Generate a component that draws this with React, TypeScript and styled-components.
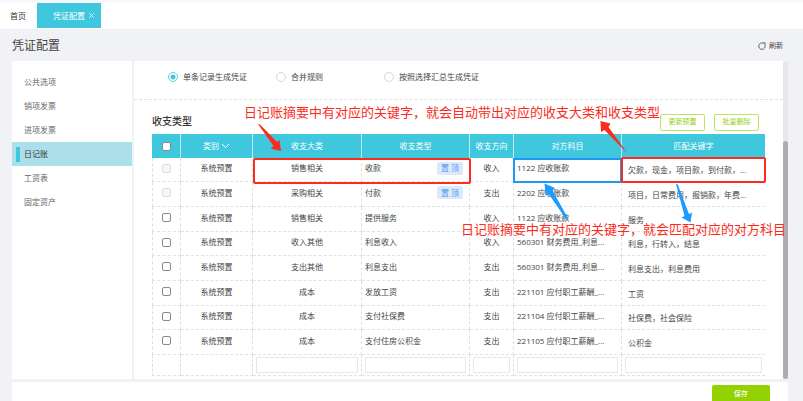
import React from 'react';
import styled, { createGlobalStyle } from 'styled-components';

const GlobalStyle = createGlobalStyle`
  * { box-sizing: border-box; }
  html, body { margin: 0; padding: 0; }
  body, button, input {
    font-family: "Open Sans", "Noto Sans CJK SC", sans-serif;
    font-size: 8px;
    line-height: 12px;
    color: #444;
  }
`;

const Page = styled.div`
  display: flex;
  flex-direction: column;
  height: 100vh;
  overflow: hidden;
  background: #f1f2f5;
`;

const TabBar = styled.nav`
  display: flex;
  flex: none;
  height: 29px;
  padding-bottom: 1px;
  border-top: 3px solid #f6f8fc;
  background: #fff;
`;

const Tab = styled.div<{ $active?: boolean }>`
  display: flex;
  align-items: center;
  gap: 4px;
  padding: ${p => (p.$active ? '0 7px 0 16px' : '0 11px 0 10px')};
  background: ${p => (p.$active ? '#3fc8dd' : '#fff')};
  a { color: ${p => (p.$active ? '#fff' : '#333')}; text-decoration: none; }
`;

const CloseButton = styled.button`
  display: flex;
  padding: 0;
  border: 0;
  background: none;
  color: #fff;
`;

const TitleBar = styled.header`
  display: flex;
  flex: none;
  align-items: center;
  justify-content: space-between;
  height: 32px;
  padding: 2px 20px 0 12px;
`;

const Title = styled.h1`
  margin: 0;
  font-size: 12px;
  line-height: 16px;
  font-weight: 400;
  color: #444;
`;

const RefreshButton = styled.button`
  display: flex;
  align-items: center;
  gap: 3px;
  padding: 0;
  border: 0;
  background: none;
  font-size: 7px;
`;

const Main = styled.div`
  display: flex;
  flex: 1;
  min-height: 0;
  gap: 2px;
  margin: 0 15px 3px 12px;
`;

const Sidebar = styled.nav`
  flex: none;
  width: 120px;
  padding-top: 9px;
  background: #fff;
`;

const SideLink = styled.a<{ $active?: boolean }>`
  display: flex;
  align-items: center;
  height: 24px;
  padding-left: 4px;
  gap: 4px;
  color: ${p => (p.$active ? '#333' : '#666')};
  background: ${p => (p.$active ? '#abe0ea' : 'transparent')};
  text-decoration: none;
  &::before {
    content: '';
    width: 4px;
    height: 15px;
    background: ${p => (p.$active ? '#3fc8dd' : 'transparent')};
  }
`;

const Content = styled.main`
  position: relative;
  flex: 1;
  min-width: 0;
  background: #fff;
`;

const Scrollbar = styled.div`
  flex: none;
  width: 5px;
  margin-left: -2px;
  padding-top: 80px;
  border-radius: 3px;
  background: #e8e8e8;
`;

const Thumb = styled.div`
  height: 100%;
  border-radius: 3px;
  background: #adadad;
`;

const RadioRow = styled.div`
  display: flex;
  height: 39px;
  padding: 0 34px 6px;
  border-bottom: 1px dashed #e2e2e2;
`;

const RadioLabel = styled.label`
  display: flex;
  align-items: center;
  gap: 5px;
  min-width: 108px;
  white-space: nowrap;
`;

const Radio = styled.input`
  appearance: none;
  width: 10px;
  height: 10px;
  margin: 0;
  border: 1px solid #d4d7da;
  border-radius: 50%;
  &:checked {
    border-color: #5fd0e2;
    background: radial-gradient(circle, #3fc8dd 0 2px, #fff 3px);
  }
`;

const SectionBar = styled.div`
  display: flex;
  align-items: center;
  height: 34px;
  padding: 0 24px 0 18px;
  gap: 9px;
`;

const SectionTitle = styled.h2`
  margin: 8px auto 0 0;
  font-size: 10px;
  line-height: 14px;
  font-weight: 500;
  color: #333;
`;

const OutlineButton = styled.button`
  width: 45px;
  height: 17px;
  margin-top: 10px;
  padding: 0;
  border: 1px solid #bfe45f;
  border-radius: 2px;
  background: #fff;
  color: #97cf13;
  font-size: 7px;
`;

const TableArea = styled.div`
  padding: 0 18px;
`;

const Table = styled.table`
  width: 100%;
  table-layout: fixed;
  border-spacing: 0;
`;

const Col = styled.col<{ $width?: number }>`
  width: ${p => (p.$width ? `${p.$width}px` : 'auto')};
`;

const HeadCell = styled.th`
  height: 24px;
  padding: 0;
  border-right: 1px solid #c3edf4;
  background: #3fc8dd;
  color: #fff;
  font-weight: 400;
  vertical-align: middle;
  &:last-child { border-right: 0; }
`;

const SortLabel = styled.span`
  display: flex;
  align-items: center;
  justify-content: center;
  gap: 2px;
`;

const Row = styled.tr`
  height: 25px;
  &:nth-child(3n + 1) { height: 24px; }
`;

const Cell = styled.td<{ $align?: 'left' | 'center'; $low?: boolean }>`
  padding: ${p => (p.$low ? '1px 6px 0' : '0 3px 3px')};
  border-right: 1px dashed #dedede;
  border-bottom: 1px dashed #e2e2e2;
  text-align: ${p => p.$align || 'center'};
  vertical-align: middle;
  white-space: nowrap;
  &:first-child { border-left: 1px dashed #dedede; }
  &:last-child { border-right: 0; }
`;

const Checkbox = styled.input`
  appearance: none;
  display: block;
  width: 9px;
  height: 9px;
  margin: 0 auto;
  border: 1px solid #8a8a8a;
  border-radius: 2px;
  background: #fff;
  &:disabled { border-color: #dcdcdc; background: #f7f7f7; }
`;

const TypeLine = styled.div`
  display: flex;
  align-items: center;
  justify-content: space-between;
  padding-right: 3px;
`;

const PinButton = styled.button`
  width: 26px;
  height: 13px;
  padding: 0;
  border: 0;
  border-radius: 2px;
  background: #dbe9fd;
  color: #5596f2;
`;

const InputCell = styled.td`
  height: 21px;
  padding: 2px 3px;
  border-right: 1px dashed #dedede;
  border-bottom: 1px dashed #e2e2e2;
  &:first-child { border-left: 1px dashed #dedede; }
  &:last-child { border-right: 0; }
`;

const TextInput = styled.input`
  display: block;
  width: 100%;
  height: 16px;
  padding: 0 3px;
  border: 1px solid #dfeaf2;
  background: #fff;
`;

const Marks = styled.svg`
  position: absolute;
  top: 0;
  left: 0;
  overflow: visible;
  pointer-events: none;
`;

const Note = styled.p<{ $left: number; $top: number }>`
  position: absolute;
  left: ${p => p.$left}px;
  top: ${p => p.$top}px;
  margin: 0;
  font-size: 13px;
  line-height: 18px;
  color: #fb2c1e;
  white-space: nowrap;
  pointer-events: none;
`;

const Footer = styled.footer`
  display: flex;
  flex: none;
  justify-content: flex-end;
  height: 19px;
  margin: 0 15px 0 12px;
  padding: 3px 18px 0;
  background: #fff;
`;

const SaveButton = styled.button`
  width: 58px;
  height: 18px;
  padding: 0;
  border: 0;
  border-radius: 2px 2px 0 0;
  background: #94d100;
  color: #fff;
  font-size: 7px;
  font-weight: 500;
`;

const menu = ['公共选项', '销项发票', '进项发票', '日记账', '工资表', '固定资产'];
const modes = ['单条记录生成凭证', '合并规则', '按照选择汇总生成凭证'];
const widths = [29, 72, 109, 108, 44, 108, undefined];
const heads = ['收支大类', '收支类型', '收支方向', '对方科目', '匹配关键字'];

const rows = [
  { group: '销售相关', type: '收款', dir: '收入', subject: '1122 应收账款', keys: '欠款，现金，项目款，到付款，...', preset: true },
  { group: '采购相关', type: '付款', dir: '支出', subject: '2202 应收账款', keys: '项目，日常费用，报销款，年费...', preset: true },
  { group: '销售相关', type: '提供服务', dir: '收入', subject: '1122 应收账款', keys: '服务' },
  { group: '收入其他', type: '利息收入', dir: '收入', subject: '560301 财务费用_利息...', keys: '利息，行转入，结息' },
  { group: '支出其他', type: '利息支出', dir: '支出', subject: '560301 财务费用_利息...', keys: '利息支出，利息费用' },
  { group: '成本', type: '发放工资', dir: '支出', subject: '221101 应付职工薪酬_...', keys: '工资' },
  { group: '成本', type: '支付社保费', dir: '支出', subject: '221104 应付职工薪酬_...', keys: '社保费，社会保险' },
  { group: '成本', type: '支付住房公积金', dir: '支出', subject: '221105 应付职工薪酬_...', keys: '公积金' },
];

export default function App() {
  return (
    <Page>
      <GlobalStyle />
      <TabBar>
        <Tab><a href="#home">首页</a></Tab>
        <Tab $active>
          <a href="#voucher">凭证配置</a>
          <CloseButton aria-label="关闭">
            <svg width="5" height="5" viewBox="0 0 5 5" stroke="currentColor" strokeWidth="0.8">
              <path d="M0.3 0.3 4.7 4.7M4.7 0.3 0.3 4.7" />
            </svg>
          </CloseButton>
        </Tab>
      </TabBar>
      <TitleBar>
        <Title>凭证配置</Title>
        <RefreshButton>
          <svg width="8" height="8" viewBox="0 0 8 8" fill="none" stroke="#555" strokeWidth="0.9">
            <path d="M5.2 1.2A3.2 3.2 0 1 0 7 3.2" />
            <path d="M4.9 0.9H7.1V3.2" />
          </svg>
          刷新
        </RefreshButton>
      </TitleBar>
      <Main>
        <Sidebar>
          {menu.map(name => (
            <SideLink key={name} href="#menu" $active={name === '日记账'}>{name}</SideLink>
          ))}
        </Sidebar>
        <Content>
          <RadioRow>
            {modes.map((name, i) => (
              <RadioLabel key={name}>
                <Radio type="radio" name="mode" defaultChecked={i === 0} />
                {name}
              </RadioLabel>
            ))}
          </RadioRow>
          <SectionBar>
            <SectionTitle>收支类型</SectionTitle>
            <OutlineButton>更新预置</OutlineButton>
            <OutlineButton>批量删除</OutlineButton>
          </SectionBar>
          <TableArea>
            <Table>
              <colgroup>
                {widths.map((w, i) => <Col key={i} $width={w} />)}
              </colgroup>
              <thead>
                <tr>
                  <HeadCell><Checkbox type="checkbox" aria-label="全选" /></HeadCell>
                  <HeadCell>
                    <SortLabel>
                      类别
                      <svg width="9" height="6" viewBox="0 0 9 6" fill="none" stroke="#fff" strokeWidth="1">
                        <path d="M1 1 4.5 4.6 8 1" />
                      </svg>
                    </SortLabel>
                  </HeadCell>
                  {heads.map(h => <HeadCell key={h}>{h}</HeadCell>)}
                </tr>
              </thead>
              <tbody>
                {rows.map((r, i) => (
                  <Row key={i}>
                    <Cell><Checkbox type="checkbox" disabled={r.preset} aria-label={r.type} /></Cell>
                    <Cell>系统预置</Cell>
                    <Cell>{r.group}</Cell>
                    <Cell $align="left">
                      <TypeLine>
                        {r.type}
                        {r.preset && <PinButton>置 顶</PinButton>}
                      </TypeLine>
                    </Cell>
                    <Cell>{r.dir}</Cell>
                    <Cell $align="left">{r.subject}</Cell>
                    <Cell $align="left" $low>{r.keys}</Cell>
                  </Row>
                ))}
                <tr>
                  <InputCell />
                  <InputCell />
                  {heads.map(h => (
                    <InputCell key={h}><TextInput type="text" aria-label={h} /></InputCell>
                  ))}
                </tr>
              </tbody>
            </Table>
          </TableArea>
          <Marks width="649" height="318" viewBox="134 61 649 318" aria-hidden="true">
            <g fill="none" strokeWidth="2">
              <rect x="254" y="159" width="216" height="24" rx="1" stroke="#fb2c1e" />
              <rect x="514" y="159" width="107" height="23" stroke="#2196f3" />
              <rect x="622" y="158" width="143" height="24" rx="1" stroke="#fb2c1e" />
            </g>
            <g fill="#fb2c1e">
              <path d="M258 124 260 124.5 277 142 279.5 140 281 151 270.5 148.5 273.5 146Z" />
              <path d="M600.5 121 610.5 123.5 608.5 127 627 153 604.5 130 601 132Z" />
            </g>
            <g fill="#1e9bff">
              <path d="M544.5 183.5 555 188 552.5 190.5 569 220 566 219 548 193 545.5 195.5Z" />
              <path d="M676 184 677.5 184 689 214 692 212.5 690.5 222.5 681.5 217.5 684.5 216Z" />
            </g>
          </Marks>
          <Note $left={110} $top={42}>日记账摘要中有对应的关键字，就会自动带出对应的收支大类和收支类型</Note>
          <Note $left={327} $top={159}>日记账摘要中有对应的关键字，就会匹配对应的对方科目</Note>
        </Content>
        <Scrollbar><Thumb /></Scrollbar>
      </Main>
      <Footer><SaveButton>保存</SaveButton></Footer>
    </Page>
  );
}
